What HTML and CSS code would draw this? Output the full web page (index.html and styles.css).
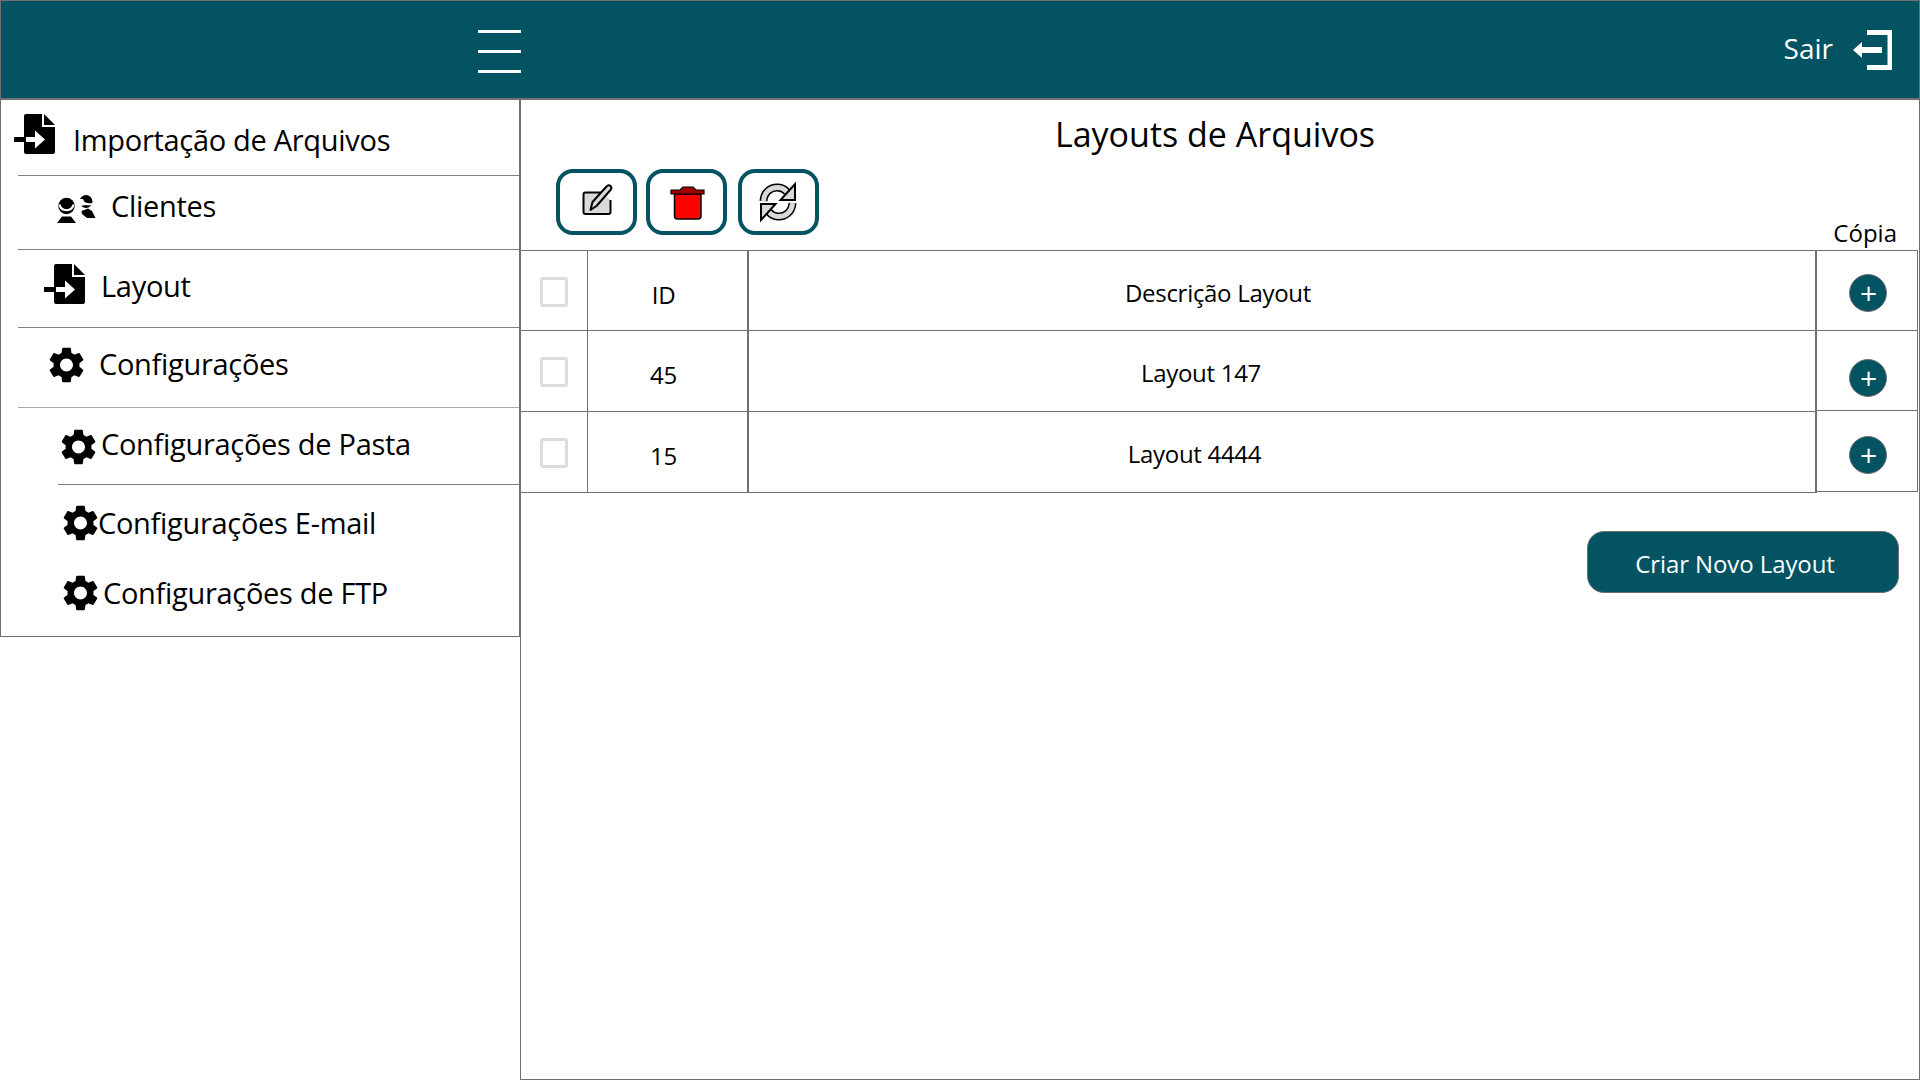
FILE: index.html
```html
<!DOCTYPE html>
<html lang="pt-BR">
<head>
<meta charset="utf-8">
<title>Layouts de Arquivos</title>
<link rel="stylesheet" href="styles.css">
</head>
<body>
<svg class="sprite" width="0" height="0" aria-hidden="true">
  <symbol id="i-file" viewBox="0 0 41 40">
    <path d="M10 2a2 2 0 0 1 2-2H28V13H41V38a2 2 0 0 1-2 2H12a2 2 0 0 1-2-2V28H0V23H10Z" fill="#000"/>
    <path d="M30 0 41 11H30Z" fill="#000"/>
    <path d="M12 23H21V16.500L31 25.500 21 34.500V28H12Z" fill="#fff"/>
  </symbol>
  <symbol id="i-gear" viewBox="2.5 2 19 20">
    <path d="M19.140 12.940c.04-.3.06-.61.06-.94 0-.32-.02-.64-.07-.94l2.030-1.580a.49.49 0 0 0 .12-.61l-1.920-3.320a.488.488 0 0 0-.59-.22l-2.390.96c-.5-.38-1.030-.7-1.620-.94l-.36-2.540a.484.484 0 0 0-.48-.41h-3.840c-.24 0-.43.17-.47.41l-.36 2.540c-.59.24-1.130.57-1.620.94l-2.390-.96c-.22-.08-.47 0-.59.22L2.740 8.870c-.12.21-.08.47.12.61l2.030 1.580c-.05.3-.09.63-.09.94s.02.64.07.94l-2.030 1.580a.49.49 0 0 0-.12.61l1.920 3.320c.12.22.37.29.59.22l2.390-.96c.5.38 1.030.7 1.620.94l.36 2.540c.05.24.24.41.48.41h3.840c.24 0 .44-.17.47-.41l.36-2.540c.59-.24 1.130-.56 1.620-.94l2.390.96c.22.08.47 0 .59-.22l1.920-3.320c.12-.22.07-.47-.12-.61l-2.010-1.580zM12 15.600c-1.980 0-3.600-1.620-3.600-3.600s1.620-3.600 3.600-3.600 3.600 1.620 3.600 3.600-1.620 3.600-3.600 3.600z" fill="#000"/>
  </symbol>
  <symbol id="i-clients" viewBox="0 0 40 28">
    <circle cx="10.500" cy="11" r="8.200" fill="#000"/>
    <path d="M3.500 9.500C5 17 16 17 17.500 9.500" fill="none" stroke="#fff" stroke-width="2"/>
    <path d="M1 28 6 21.500H15L20 28Z" fill="#000"/>
    <circle cx="30" cy="6.500" r="6.500" fill="#000"/>
    <path d="M22.500 5C26 6 28 11 36 9" fill="none" stroke="#fff" stroke-width="2.200"/>
    <path d="M22 4H27L30 10 24 11Z" fill="#fff"/>
    <path d="M25.500 16 32 13.500 36 16 39.500 23H31L26 19Z" fill="#000"/>
  </symbol>
</svg>

<div class="app">
  <header class="topbar">
    <div class="burger"><span></span><span></span><span></span></div>
    <div class="exit">
      <span class="exit-label">Sair</span>
      <svg class="exit-icon" viewBox="0 0 39 40"><path d="M14 0H39V40H14V35H34.500V5H14Z" fill="#fff"/><path d="M0 20 9 12V17H29V23H9V28Z" fill="#fff"/></svg>
    </div>
  </header>

  <div class="content">
    <nav class="side">
      <div class="item item-1"><svg class="ic ic-file"><use href="#i-file"/></svg><span class="label">Importação de Arquivos</span></div>
      <div class="item item-2"><svg class="ic ic-clients"><use href="#i-clients"/></svg><span class="label">Clientes</span></div>
      <div class="item item-3"><svg class="ic ic-file"><use href="#i-file"/></svg><span class="label">Layout</span></div>
      <div class="item item-4"><svg class="ic ic-gear"><use href="#i-gear"/></svg><span class="label">Configurações</span></div>
      <div class="item item-5"><svg class="ic ic-gear"><use href="#i-gear"/></svg><span class="label">Configurações de Pasta</span></div>
      <div class="item item-6"><svg class="ic ic-gear"><use href="#i-gear"/></svg><span class="label">Configurações E-mail</span></div>
      <div class="item item-7"><svg class="ic ic-gear"><use href="#i-gear"/></svg><span class="label">Configurações de FTP</span></div>
    </nav>

    <main class="main">
      <h1 class="title">Layouts de Arquivos</h1>
      <div class="toolbar">
        <div class="tools">
          <button class="tool"><svg class="tool-ic" viewBox="-3.500 -3 50 50"><path d="M10 12H26L35 20V32a2 2 0 0 1-2 2H10a2 2 0 0 1-2-2V14a2 2 0 0 1 2-2Z" fill="#d9d9d9"/><path d="M26 12.500H10a2 2 0 0 0-2 2V32a2 2 0 0 0 2 2H33a2 2 0 0 0 2-2V20" fill="none" stroke="#000" stroke-width="2"/><path d="M15 30 17 22 31 6.500C32.500 5 34 5 35 6S36.500 8.500 35 10L21 26Z" fill="#d9d9d9" stroke="#000" stroke-width="2" stroke-linejoin="round"/></svg></button>
          <button class="tool tool-mid"><svg class="tool-ic" viewBox="-4 -3 50 50"><path d="M8.500 14H35V36a3 3 0 0 1-3 3H11.500a3 3 0 0 1-3-3Z" fill="#f00" stroke="#000" stroke-width="1.500"/><path d="M14 10 17 7H27L30 10H38V14H5V10Z" fill="#a00000" stroke="#000" stroke-width="1.200"/></svg></button>
          <button class="tool"><svg class="tool-ic" viewBox="1 0 50 50"><g id="rf"><path d="M10.500 24C11 15 18 10 25 10.500 29 10.800 32 12.500 34 15" fill="none" stroke="#000" stroke-width="8"/><path d="M10.500 24C11 15 18 10 25 10.500 29 10.800 32 12.500 34 15" fill="none" stroke="#d9d9d9" stroke-width="5"/><path d="M42 7V23H27.500Z" fill="#d9d9d9" stroke="#000" stroke-width="2"/></g><use href="#rf" transform="rotate(180 25 25)"/></svg></button>
        </div>
        <div class="copy-head">Cópia</div>
      </div>

      <div class="tables">
        <div class="grid">
          <div class="cell h-80 c-check"><input class="check" type="checkbox"></div>
          <div class="cell h-80 c-id t-id-h">ID</div>
          <div class="cell h-80 c-desc t-d0">Descrição Layout</div>

          <div class="cell h-81 c-check c-check-low"><input class="check" type="checkbox"></div>
          <div class="cell h-81 c-id t-id">45</div>
          <div class="cell h-81 c-desc t-d1">Layout 147</div>

          <div class="cell h-81 c-check c-check-low"><input class="check" type="checkbox"></div>
          <div class="cell h-81 c-id t-id">15</div>
          <div class="cell h-81 c-desc t-d2">Layout 4444</div>
        </div>
        <div class="copy">
          <div class="copy-cell h-80 p-a"><button class="plus">+</button></div>
          <div class="copy-cell h-80 p-b"><button class="plus">+</button></div>
          <div class="copy-cell h-81 p-c"><button class="plus">+</button></div>
        </div>
      </div>

      <div class="actions"><button class="create">Criar Novo Layout</button></div>
    </main>
  </div>
</div>
</body>
</html>
```

FILE: styles.css
```css
* { box-sizing: border-box; }
html, body { margin: 0; padding: 0; background: #fff; }
body { font-family: "Open Sans", "Noto Sans", "Liberation Sans", sans-serif; color: #000; overflow: hidden; }
.sprite { position: absolute; }
.app { width: 1920px; height: 1080px; display: flex; flex-direction: column; }

.topbar { height: 100px; flex: none; background: #035362; border: 1px solid #707070; border-bottom-width: 2px; display: flex; align-items: flex-start; padding-left: 477px; padding-right: 27px; }
.burger { width: 43px; margin-top: 29px; display: flex; flex-direction: column; gap: 17px; }
.burger span { height: 3px; background: #fff; display: block; }
.exit { margin-left: auto; display: flex; align-items: flex-start; }
.exit-label { color: #fff; font-size: 28px; line-height: 40px; margin-top: 27px; }
.exit-icon { width: 39px; height: 40px; margin-top: 29px; margin-left: 20px; }

.content { flex: 1; display: flex; min-height: 0; }
.side { width: 520px; height: 537px; flex: none; border-left: 1px solid #707070; border-right: 1px solid #707070; border-bottom: 1px solid #707070; display: flex; flex-direction: column; }
.item { display: flex; align-items: flex-start; flex: none; }
.label { font-size: 29px; line-height: 40px; letter-spacing: -0.3px; white-space: nowrap; }
.ic { display: block; flex: none; }
.ic-file { width: 41px; height: 40px; }
.ic-clients { width: 40px; height: 28px; }
.ic-gear { width: 35px; height: 36px; }

.item-1 { height: 76px; margin-left: 17px; border-bottom: 1px solid #808080; }
.item-1 .ic { margin-top: 14px; margin-left: -4px; }
.item-1 .label { margin-top: 20px; margin-left: 18px; }
.item-2 { height: 74px; margin-left: 17px; padding-left: 38px; border-bottom: 1px solid #808080; }
.item-2 .ic { margin-top: 19px; }
.item-2 .label { margin-top: 10px; margin-left: 15px; }
.item-3 { height: 78px; margin-left: 17px; padding-left: 26px; border-bottom: 1px solid #808080; }
.item-3 .ic { margin-top: 14px; }
.item-3 .label { margin-top: 16px; margin-left: 16px; }
.item-4 { height: 80px; margin-left: 17px; padding-left: 31px; border-bottom: 1px solid #a8a8a8; }
.item-4 .ic { margin-top: 19px; }
.item-4 .label { margin-top: 16px; margin-left: 15px; }
.item-5 { height: 77px; margin-left: 57px; padding-left: 3px; border-bottom: 1px solid #808080; }
.item-5 .ic { margin-top: 21px; }
.item-5 .label { margin-top: 16px; margin-left: 5px; }
.item-6 { height: 75px; padding-left: 62px; }
.item-6 .ic { margin-top: 20px; }
.item-6 .label { margin-top: 18px; margin-left: 0; }
.item-7 { height: 75px; padding-left: 62px; }
.item-7 .ic { margin-top: 15px; }
.item-7 .label { margin-top: 13px; margin-left: 5px; }

.main { flex: 1; min-width: 0; border-left: 1px solid #707070; border-right: 1px solid #707070; border-bottom: 1px solid #707070; display: flex; flex-direction: column; }
.title { margin: 0; height: 69px; padding-top: 9px; font-weight: 400; font-size: 34px; line-height: 50px; text-align: center; padding-right: 10px; }
.toolbar { height: 81px; display: flex; justify-content: space-between; align-items: flex-end; padding-left: 35px; padding-right: 22px; flex: none; }
.tools { display: flex; gap: 10px; align-self: flex-start; }
.tool { width: 81px; height: 66px; padding: 0; margin: 0; background: #fff; border: 4px solid #035362; border-radius: 17px; display: flex; align-items: center; justify-content: center; }
.tool-mid { margin-left: -1px; margin-right: 1px; }
.tool-ic { width: 50px; height: 50px; display: block; flex: none; }
.copy-head { font-size: 24px; line-height: 34px; }

.tables { display: flex; flex: none; }
.grid { width: 1296px; display: grid; grid-template-columns: 67px 161px 1068px; border-top: 1px solid #707070; }
.cell { display: flex; align-items: center; justify-content: center; border-bottom: 1px solid #707070; font-size: 24px; line-height: 34px; letter-spacing: -0.3px; }
.c-check { border-right: 1px solid #707070; padding-top: 3px; }
.c-check-low { padding-top: 1px; }
.c-id { border-right: 2px solid #707070; }
.c-desc { border-right: 2px solid #707070; }
.h-80 { height: 80px; }
.h-81 { height: 81px; }
.t-id-h { padding-top: 9px; padding-right: 8px; }
.t-id { padding-top: 7px; padding-right: 8px; }
.t-d0 { padding-top: 5px; padding-right: 128px; }
.t-d1 { padding-top: 4px; padding-right: 162px; }
.t-d2 { padding-top: 3px; padding-right: 175px; }
.check { appearance: none; -webkit-appearance: none; width: 28px; height: 30px; margin: 0; background: #fff; border: 3px solid #dcdcdc; border-radius: 3px; }

.copy { width: 101px; height: 242px; border-top: 1px solid #707070; border-right: 1px solid #707070; }
.copy-cell { display: flex; align-items: center; justify-content: center; border-bottom: 1px solid #707070; padding-left: 2px; }
.p-a { padding-top: 5px; }
.p-b { padding-top: 15px; }
.p-c { padding-top: 8px; }
.plus { width: 38px; height: 38px; padding: 0 0 0 1px; border: 1px solid #707070; border-radius: 50%; background: #035362; color: #fff; font-family: "Open Sans", sans-serif; font-weight: 400; font-size: 30px; line-height: 34px; display: flex; align-items: center; justify-content: center; }

.actions { display: flex; justify-content: flex-end; padding-right: 20px; margin-top: 38px; }
.create { width: 312px; height: 62px; padding: 3px 16px 0 0; background: #035362; border: 1px solid #707070; border-radius: 17px; color: #fff; font-family: inherit; font-size: 24px; letter-spacing: -0.1px; text-align: center; }
```
